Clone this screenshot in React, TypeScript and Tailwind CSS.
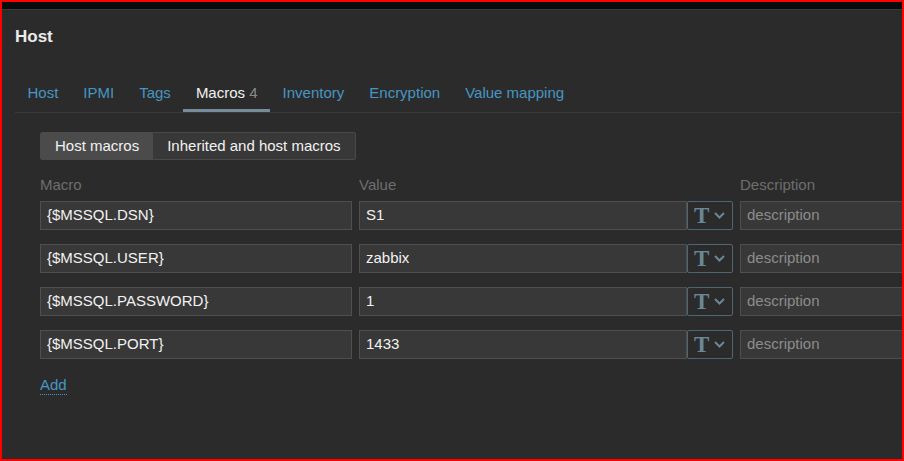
import React from 'react';

const tabs = ['Host', 'IPMI', 'Tags', 'Macros', 'Inventory', 'Encryption', 'Value mapping'];

const macros = [
  { macro: '{$MSSQL.DSN}', value: 'S1' },
  { macro: '{$MSSQL.USER}', value: 'zabbix' },
  { macro: '{$MSSQL.PASSWORD}', value: '1' },
  { macro: '{$MSSQL.PORT}', value: '1433' },
];

function TypeButton() {
  return (
    <div className="w-[46px] h-[29px] shrink-0 flex items-center pl-[6px] gap-[5px] border border-[#4d6673] rounded-[2px] bg-[#2b2b2b]">
      <span className="text-[23px] leading-[23px] font-bold text-[#6b8797] font-['Liberation_Serif',serif]">T</span>
      <svg width="11" height="7" viewBox="0 0 11 7" fill="none">
        <polyline points="1,1 5.5,5.5 10,1" stroke="#6b8797" strokeWidth="2" />
      </svg>
    </div>
  );
}

export default function App() {
  return (
    <div className="w-[904px] h-[461px] border-2 border-[#ff0000] bg-[#2b2b2b] overflow-hidden flex flex-col font-['Liberation_Sans',Arial,sans-serif] text-[15px] text-[#f2f2f2]">
      <div className="h-[8px] shrink-0 bg-[#080b0e] border-b border-[#3a3a3a]" />

      <div className="pl-[13px] pt-[17px]">
        <h1 className="text-[17px] leading-[20px] font-bold text-[#ececec]">Host</h1>
      </div>

      {/* Tabs */}
      <div className="ml-[13px] mt-[37px] flex border-b border-[#3a3a3a]">
        {tabs.map((t) => (
          <div
            key={t}
            className={`px-[12.5px] pb-[7px] leading-[18px] border-b-[3px] ${
              t === 'Macros' ? 'border-[#768d99] text-[#f2f2f2]' : 'border-transparent text-[#4796c4]'
            }`}
          >
            {t}
            {t === 'Macros' && <span className="text-[#8a8a8a]"> 4</span>}
          </div>
        ))}
      </div>

      <div className="pl-[38px]">
        {/* Segmented buttons */}
        <div className="mt-[19px] flex w-fit border border-[#4a4a4a] rounded-[2px] overflow-hidden">
          <div className="px-[14px] leading-[26px] bg-[#4b4b4b]">Host macros</div>
          <div className="px-[14px] leading-[26px] bg-[#383838]">Inherited and host macros</div>
        </div>

        {/* Column headers */}
        <div className="mt-[16px] flex leading-[18px] text-[#6e6e6e]">
          <div className="w-[319px]">Macro</div>
          <div className="w-[381px]">Value</div>
          <div>Description</div>
        </div>

        {/* Rows */}
        <div className="mt-[7px] flex flex-col gap-[14px]">
          {macros.map((m) => (
            <div key={m.macro} className="flex items-center">
              <div className="w-[312px] h-[29px] shrink-0 px-[6px] flex items-center bg-[#383838] border border-[#4f4f4f]">
                {m.macro}
              </div>
              <div className="ml-[7px] w-[328px] h-[29px] shrink-0 px-[6px] flex items-center bg-[#383838] border border-[#4f4f4f]">
                {m.value}
              </div>
              <TypeButton />
              <div className="ml-[7px] w-[300px] h-[29px] shrink-0 px-[6px] flex items-center bg-[#383838] border border-[#4f4f4f] text-[#8c8c8c]">
                description
              </div>
            </div>
          ))}
        </div>

        <div className="mt-[17px] leading-[18px]">
          <span className="text-[#4796c4] border-b border-dotted border-[#4796c4] pb-[1px]">Add</span>
        </div>
      </div>
    </div>
  );
}
